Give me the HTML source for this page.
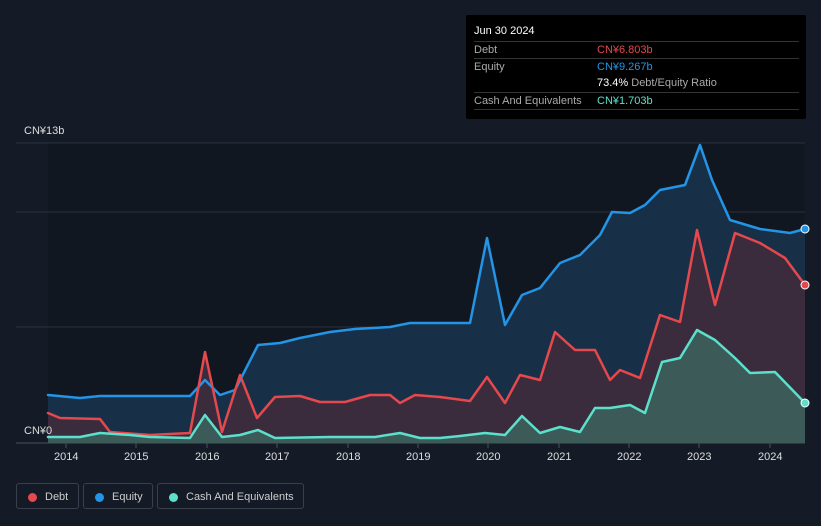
<!DOCTYPE html>
<html><head><style>
body{margin:0;width:821px;height:526px;background:#151b26;font-family:"Liberation Sans",sans-serif;overflow:hidden;position:relative}
.tip{position:absolute;left:466px;top:15px;width:340px;height:104px;background:#000;border-radius:2px}
.tip .h{position:absolute;left:8px;top:10px;color:#fff;font-size:11px}
.row{position:absolute;left:8px;width:325px;border-top:1px solid #333;height:17px;font-size:11px;line-height:17px;color:#aaa}
.row span{position:absolute;left:123px}
.leg{position:absolute;top:483px;height:26px;border:1px solid #3a404b;border-radius:3px;color:#ccc;font-size:11px;line-height:26px;box-sizing:border-box}
.leg i{position:absolute;left:11px;top:9px;width:9px;height:9px;border-radius:50%}
.ax{position:absolute;top:451px;color:#ddd;font-size:11px}
</style></head><body>
<svg width="821" height="526" style="position:absolute;left:0;top:0">
<rect x="48" y="143" width="757" height="300" fill="#111720"/>
<line x1="16" y1="143" x2="805" y2="143" stroke="#2c323d"/>
<line x1="16" y1="212" x2="805" y2="212" stroke="#2c323d"/>
<line x1="16" y1="327" x2="805" y2="327" stroke="#2c323d"/>
<line x1="16" y1="443" x2="805" y2="443" stroke="#4a505a"/>
<g stroke-linejoin="round" stroke-linecap="round" stroke-width="2.5" fill-opacity="1">
<polygon fill="#173048" points="48,443 48,395 80,398 100,396 190,396 205,380 220,395 235,390 258,345 280,343 300,338 330,332 355,329 390,327 410,323 440,323 470,323 487,238 505,325 522,295 540,288 560,263 580,255 600,235 612,212 630,213 645,205 660,190 685,185 700,145 712,180 730,220 760,229 790,233 805,229 805,443"/>
<polygon fill="#3a2c3c" points="48,443 48,413 60,418 100,419 110,432 150,435 190,433 205,352 222,432 240,375 257,418 275,397 300,396 320,402 345,402 370,395 390,395 400,403 415,395 440,397 470,401 487,377 505,403 520,375 540,380 555,332 575,350 595,350 610,380 620,370 640,378 660,315 680,322 697,230 715,305 735,233 760,243 785,258 805,285 805,443"/>
<polygon fill="#3b5a58" points="48,443 48,437 80,437 100,433 130,435 150,437 190,438 205,415 222,437 240,435 258,430 275,438 330,437 350,437 375,437 400,433 420,438 440,438 460,436 485,433 505,435 522,416 540,433 560,427 580,432 595,408 610,408 630,405 645,413 662,362 680,358 697,330 715,340 735,358 750,373 775,372 805,403 805,443"/>
<polyline fill="none" stroke="#2394e6" points="48,395 80,398 100,396 190,396 205,380 220,395 235,390 258,345 280,343 300,338 330,332 355,329 390,327 410,323 440,323 470,323 487,238 505,325 522,295 540,288 560,263 580,255 600,235 612,212 630,213 645,205 660,190 685,185 700,145 712,180 730,220 760,229 790,233 805,229"/>
<polyline fill="none" stroke="#e5484d" points="48,413 60,418 100,419 110,432 150,435 190,433 205,352 222,432 240,375 257,418 275,397 300,396 320,402 345,402 370,395 390,395 400,403 415,395 440,397 470,401 487,377 505,403 520,375 540,380 555,332 575,350 595,350 610,380 620,370 640,378 660,315 680,322 697,230 715,305 735,233 760,243 785,258 805,285"/>
<polyline fill="none" stroke="#5ce0cc" points="48,437 80,437 100,433 130,435 150,437 190,438 205,415 222,437 240,435 258,430 275,438 330,437 350,437 375,437 400,433 420,438 440,438 460,436 485,433 505,435 522,416 540,433 560,427 580,432 595,408 610,408 630,405 645,413 662,362 680,358 697,330 715,340 735,358 750,373 775,372 805,403"/>
</g>
<circle cx="805" cy="229" r="4" fill="#2394e6" stroke="#fff" stroke-width="1"/>
<circle cx="805" cy="285" r="4" fill="#e5484d" stroke="#fff" stroke-width="1"/>
<circle cx="805" cy="403" r="4" fill="#5ce0cc" stroke="#fff" stroke-width="1"/>
<g stroke="#4a505a"><line x1="66" y1="443" x2="66" y2="448"/><line x1="136" y1="443" x2="136" y2="448"/><line x1="207" y1="443" x2="207" y2="448"/><line x1="277" y1="443" x2="277" y2="448"/><line x1="348" y1="443" x2="348" y2="448"/><line x1="418" y1="443" x2="418" y2="448"/><line x1="488" y1="443" x2="488" y2="448"/><line x1="559" y1="443" x2="559" y2="448"/><line x1="629" y1="443" x2="629" y2="448"/><line x1="699" y1="443" x2="699" y2="448"/><line x1="770" y1="443" x2="770" y2="448"/></g>
</svg>
<div style="position:absolute;left:24px;top:125px;color:#ddd;font-size:11px">CN¥13b</div>
<div style="position:absolute;left:24px;top:425px;color:#ddd;font-size:11px">CN¥0</div>
<div class="ax" style="left:54px">2014</div><div class="ax" style="left:124px">2015</div><div class="ax" style="left:195px">2016</div><div class="ax" style="left:265px">2017</div><div class="ax" style="left:336px">2018</div><div class="ax" style="left:406px">2019</div><div class="ax" style="left:476px">2020</div><div class="ax" style="left:547px">2021</div><div class="ax" style="left:617px">2022</div><div class="ax" style="left:687px">2023</div><div class="ax" style="left:758px">2024</div>
<div class="tip">
<div class="h">Jun 30 2024</div>
<div class="row" style="top:26px">Debt<span style="color:#e5484d">CN¥6.803b</span></div>
<div class="row" style="top:43px">Equity<span style="color:#2394e6">CN¥9.267b</span></div>
<div class="row" style="top:60px;border-top:none"><span style="color:#fff">73.4% <b style="font-weight:normal;color:#aaa">Debt/Equity Ratio</b></span></div>
<div class="row" style="top:77px">Cash And Equivalents<span style="color:#5ce0cc">CN¥1.703b</span></div>
<div class="row" style="top:94px;height:0"></div>
</div>
<div class="leg" style="left:16px;width:63px"><i style="background:#e5484d"></i><span style="position:absolute;left:28px">Debt</span></div>
<div class="leg" style="left:83px;width:70px"><i style="background:#2394e6"></i><span style="position:absolute;left:28px">Equity</span></div>
<div class="leg" style="left:157px;width:147px"><i style="background:#5ce0cc"></i><span style="position:absolute;left:28px">Cash And Equivalents</span></div>
</body></html>
